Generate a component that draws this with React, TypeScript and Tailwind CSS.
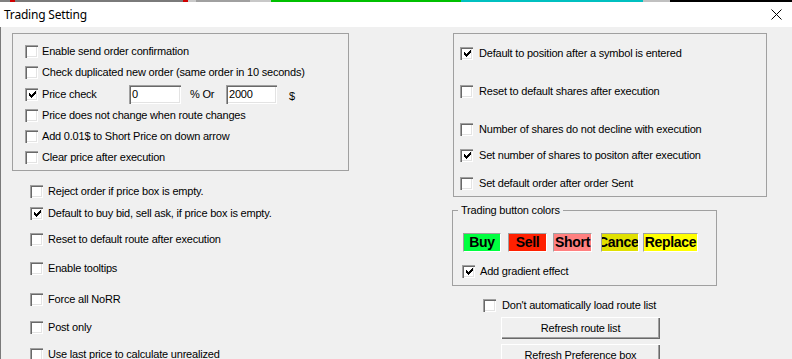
import React from "react"

const Check = () => (
    <svg width="7" height="7" viewBox="0 0 7 7" shapeRendering="crispEdges">
        <rect x="6" y="0" width="1" height="1" fill="#000" />
        <rect x="5" y="1" width="2" height="1" fill="#000" />
        <rect x="0" y="2" width="1" height="1" fill="#000" />
        <rect x="4" y="2" width="3" height="1" fill="#000" />
        <rect x="0" y="3" width="2" height="1" fill="#000" />
        <rect x="3" y="3" width="3" height="1" fill="#000" />
        <rect x="0" y="4" width="5" height="1" fill="#000" />
        <rect x="1" y="5" width="3" height="1" fill="#000" />
        <rect x="2" y="6" width="1" height="1" fill="#000" />
    </svg>
)

const Box = ({ checked }: { checked?: boolean }) => (
    <div className="w-[13px] h-[13px] shrink-0 bg-white flex items-center justify-center shadow-[inset_1px_1px_0_#a0a0a0,inset_2px_2px_0_#696969,inset_-1px_-1px_0_#ffffff,inset_-2px_-2px_0_#e3e3e3]">
        {checked && <div className="mt-[1px] ml-[1px]"><Check /></div>}
    </div>
)

const Row = ({ label, checked, className, gap }: any) => (
    <div className={"flex items-center h-[20px] " + (className || "")}>
        <Box checked={checked} />
        <span className={"whitespace-nowrap " + (gap || "ml-[5px]")}>{label}</span>
    </div>
)

const Field = ({ value, w }: any) => (
    <div className={"h-[19px] bg-white flex items-center pl-[3px] shadow-[inset_1px_1px_0_#a0a0a0,inset_2px_2px_0_#696969,inset_-1px_-1px_0_#ffffff,inset_-2px_-2px_0_#e3e3e3] " + w}>
        {value}
    </div>
)

const ColorBtn = ({ label, color, w, className }: any) => (
    <div className={"h-[19px] flex items-center justify-center overflow-hidden whitespace-nowrap font-bold text-[14px] tracking-[-0.3px] border border-t-[#a0a0a0] border-l-[#a0a0a0] border-b-white border-r-white " + color + " " + w + " " + (className || "")}>
        {label}
    </div>
)

const PushBtn = ({ label, className }: any) => (
    <div className={"w-[159px] h-[22px] flex items-center justify-center bg-[#f0f0f0] shadow-[inset_1px_1px_0_#ffffff,inset_-1px_-1px_0_#696969,inset_-2px_-2px_0_#a0a0a0] " + (className || "")}>
        {label}
    </div>
)

export default function App() {
    return (
        <div className="w-[792px] h-[359px] overflow-hidden bg-[#f0f0f0] flex flex-col text-[11px] tracking-[-0.2px] text-black font-['Liberation_Sans',Arial,sans-serif]">

            {/* strip of the window behind */}
            <div className="h-[2px] flex shrink-0">
                <div className="w-[10px] bg-[#808080]" />
                <div className="w-[5px] bg-[#d00000]" />
                <div className="w-[168px] bg-[#7a7a7a]" />
                <div className="w-[5px] bg-[#d00000]" />
                <div className="w-[8px] bg-[#c8c8c8]" />
                <div className="w-[54px] bg-[#a0a0a0]" />
                <div className="w-[21px] bg-[#c8c8c8]" />
                <div className="w-[190px] bg-[#00c000]" />
                <div className="w-[182px] bg-[#00c0c0]" />
                <div className="w-[27px] bg-[#c0c0c0]" />
                <div className="flex-1 bg-black" />
            </div>

            {/* title bar */}
            <div className="h-[25px] shrink-0 bg-white flex items-center justify-between pl-[4px] pr-[10px]">
                <span className="text-[12px] font-['Noto_Sans',sans-serif] tracking-[-0.2px]">Trading Setting</span>
                <svg width="11" height="11" viewBox="0 0 11 11">
                    <path d="M0.5 0.5 L10.5 10.5 M10.5 0.5 L0.5 10.5" stroke="#000" strokeWidth="1" />
                </svg>
            </div>

            <div className="flex-1 flex border-l border-[#7a7a7a] pl-[11px] pt-[6px]">

                {/* left column */}
                <div className="w-[337px] shrink-0">
                    <div className="h-[138px] border border-[#a0a0a0] pl-[12px] pt-[7px]">
                        <Row label="Enable send order confirmation" gap="ml-[4px]" className="h-[21px]" />
                        <Row label="Check duplicated new order (same order in 10 seconds)" gap="ml-[4px]" className="h-[21px]" />
                        <div className="flex items-center h-[22px]">
                            <Box checked />
                            <span className="ml-[4px] w-[87px]">Price check</span>
                            <Field value="0" w="w-[52px]" />
                            <span className="ml-[9px] w-[36px]">% Or</span>
                            <Field value="2000" w="w-[51px]" />
                            <span className="ml-[12px] mt-[5px]">$</span>
                        </div>
                        <Row label="Price does not change when route changes" gap="ml-[4px]" className="h-[21px]" />
                        <Row label="Add 0.01$ to Short Price on down arrow" gap="ml-[4px]" className="h-[21px]" />
                        <Row label="Clear price after execution" gap="ml-[4px]" className="h-[21px]" />
                    </div>

                    <div className="ml-[18px]">
                        <Row label="Reject order if price box is empty." className="mt-[10px]" />
                        <Row label="Default to buy bid, sell ask, if price box is empty." checked className="mt-[2px]" />
                        <Row label="Reset to default route after execution" className="mt-[6px]" />
                        <Row label="Enable tooltips" className="mt-[9px]" />
                        <Row label="Force all NoRR" className="mt-[11px]" />
                        <Row label="Post only" className="mt-[8px]" />
                        <Row label="Use last price to calculate unrealized" className="mt-[7px]" />
                    </div>
                </div>

                {/* right column */}
                <div className="ml-[103px] w-[315px] shrink-0">
                    <div className="ml-[1px] w-[314px] h-[164px] border border-[#a0a0a0] pl-[6px] pt-[9px]">
                        <Row label="Default to position after a symbol is entered" checked gap="ml-[6px]" />
                        <Row label="Reset to default shares after execution" gap="ml-[6px]" className="mt-[18px]" />
                        <Row label="Number of shares do not decline with execution" gap="ml-[6px]" className="mt-[18px]" />
                        <Row label="Set number of shares to positon after execution" checked gap="ml-[6px]" className="mt-[6px]" />
                        <Row label="Set default order after order Sent" gap="ml-[6px]" className="mt-[8px]" />
                    </div>

                    <fieldset className="mt-[6px] w-[265px] border border-[#a0a0a0] pb-[4px]">
                        <legend className="ml-[5px] px-[3px] leading-[14px]">Trading button colors</legend>
                        <div className="pl-[10px] mt-[16px] flex">
                            <ColorBtn label="Buy" color="bg-[#00ff40]" w="w-[38px]" />
                            <ColorBtn label="Sell" color="bg-[#ff2000]" w="w-[39px]" className="ml-[7px]" />
                            <ColorBtn label="Short" color="bg-[#ff8080]" w="w-[39px]" className="ml-[6px]" />
                            <ColorBtn label="Cancel" color="bg-[#e0e000]" w="w-[38px]" className="ml-[9px]" />
                            <ColorBtn label="Replace" color="bg-[#ffff00]" w="w-[55px]" className="ml-[4px]" />
                        </div>
                        <Row label="Add gradient effect" checked className="ml-[9px] mt-[9px]" />
                    </fieldset>

                    <Row label="Don't automatically load route list" gap="ml-[6px]" className="ml-[31px] mt-[9px]" />
                    <PushBtn label="Refresh route list" className="ml-[49px] mt-[2px]" />
                    <PushBtn label="Refresh Preference box" className="ml-[49px] mt-[5px]" />
                </div>
            </div>
        </div>
    )
}
